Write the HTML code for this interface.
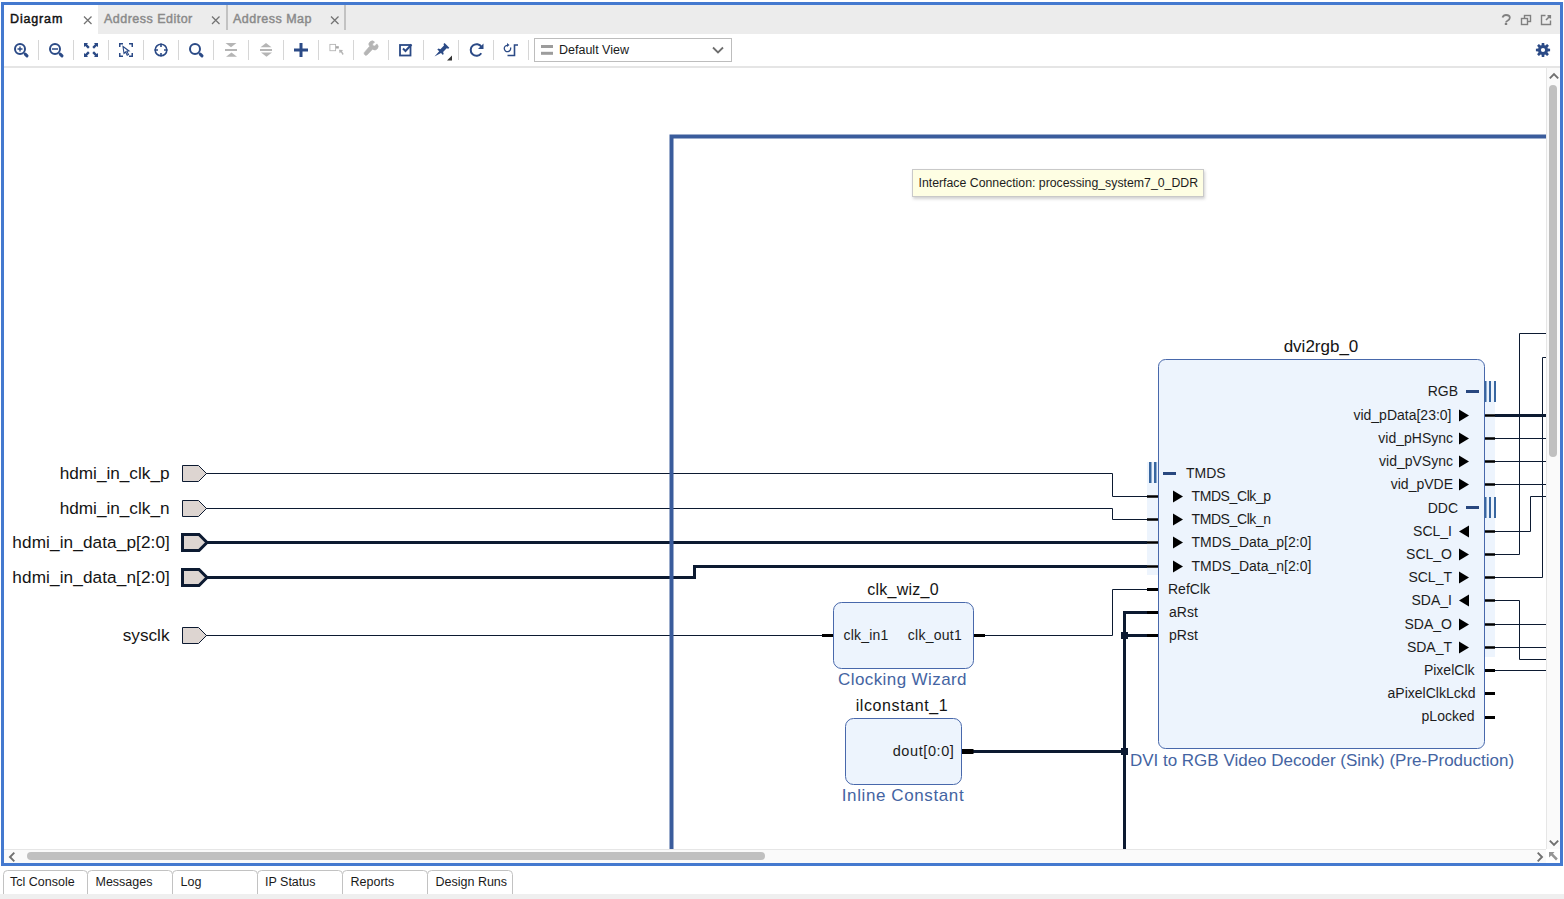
<!DOCTYPE html>
<html><head><meta charset="utf-8">
<style>
*{margin:0;padding:0;box-sizing:border-box}
html,body{width:1564px;height:899px;overflow:hidden;background:#fff;font-family:"Liberation Sans",sans-serif;color:#1a1a1a}
.a{position:absolute;white-space:pre}
#frame{position:absolute;left:1px;top:2px;width:1562px;height:864px;border:3px solid #4479cf}
#tabbar{position:absolute;left:4px;top:5px;width:1556px;height:29px;background:#ececec}
#toolbar{position:absolute;left:4px;top:34px;width:1556px;height:32px;background:#fff}
#tbsep{position:absolute;left:4px;top:66px;width:1556px;height:2px;background:#e5e5e5}
#canvas{position:absolute;left:4px;top:68px;width:1542px;height:781px;background:#fff;overflow:hidden}
.tab{position:absolute;top:5px;height:29px;font-size:12.5px;line-height:29px;color:#8a8a8a}
.tsep{position:absolute;top:40px;width:1px;height:21px;background:#d4d4d4}
.btab{position:absolute;top:870px;height:24px;border:1px solid #c4c4c4;border-bottom:none;border-radius:4px 4px 0 0;font-size:12.5px;line-height:22px;padding-left:7px;color:#1a1a1a;background:#fff}
.lbl{position:absolute;white-space:pre;font-size:17px;line-height:20px;color:#151515}
.pl{position:absolute;white-space:pre;font-size:14px;line-height:16px;color:#1c1c1c}
.typ{position:absolute;white-space:pre;font-size:17px;line-height:20px;color:#4a6aa8}
</style></head><body>
<div id="frame"></div>
<div id="tabbar"></div>
<div id="toolbar"></div>
<div id="tbsep"></div>
<div id="canvas"></div>

<!-- tabs -->
<div class="tab" style="left:4px;width:94px;background:#fff;color:#111;padding-left:6px;letter-spacing:0.85px;-webkit-text-stroke:0.45px #111">Diagram</div>
<div class="tab" style="left:104px;letter-spacing:0.48px;-webkit-text-stroke:0.45px #8a8a8a">Address Editor</div>
<div class="tab" style="left:233px;letter-spacing:0.48px;-webkit-text-stroke:0.45px #8a8a8a">Address Map</div>

<!-- tab separators & tab bar icons -->
<div class="a" style="left:226px;top:5px;width:2px;height:25px;background:#c2c2c2"></div>
<div class="a" style="left:344px;top:5px;width:2px;height:25px;background:#c2c2c2"></div>
<svg class="a" style="left:0;top:0" width="1564" height="68" viewBox="0 0 1564 68">
 <g stroke="#737373" stroke-width="1.3" fill="none">
  <path d="M84 16.5 L91.5 24 M91.5 16.5 L84 24"/>
  <path d="M212 16.5 L219.5 24 M219.5 16.5 L212 24"/>
  <path d="M331 16.5 L338.5 24 M338.5 16.5 L331 24"/>
 </g>
 <g stroke="#808080" fill="none" stroke-width="1.4">
  <path d="M1502.5 17.5 Q1503.5 15 1506 15 Q1509.8 15 1509.8 17.8 Q1509.8 19.5 1507.5 20.8 Q1506 21.6 1506 22.5" stroke-width="1.8"/>
  <rect x="1524.5" y="15.5" width="6" height="6"/>
  <rect x="1521.5" y="18.5" width="6" height="6" fill="#ececec"/>
  <path d="M1545.5 15.5 H1541.5 V24.5 H1550.5 V20.5"/>
  <path d="M1546 20 L1550 16 M1547.5 15.8 H1550.3 V18.5" stroke-width="1.6"/>
 </g>
 <rect x="1504.8" y="23" width="2.4" height="2" fill="#808080"/>
 <!-- toolbar separators -->
 <g fill="#d6d6d6">
  <rect x="38" y="40" width="1" height="20"/><rect x="73" y="40" width="1" height="20"/><rect x="108" y="40" width="1" height="20"/>
  <rect x="143" y="40" width="1" height="20"/><rect x="178" y="40" width="1" height="20"/><rect x="213" y="40" width="1" height="20"/>
  <rect x="248" y="40" width="1" height="20"/><rect x="283" y="40" width="1" height="20"/><rect x="318" y="40" width="1" height="20"/>
  <rect x="353" y="40" width="1" height="20"/><rect x="388" y="40" width="1" height="20"/><rect x="423" y="40" width="1" height="20"/>
  <rect x="458" y="40" width="1" height="20"/><rect x="493" y="40" width="1" height="20"/><rect x="528" y="40" width="1" height="20"/>
 </g>
 <g stroke="#2b4a86" fill="none" stroke-width="2">
  <!-- zoom in -->
  <circle cx="20" cy="49" r="5"/>
  <path d="M17.5 49 H22.5 M20 46.5 V51.5" stroke-width="1.4"/>
  <path d="M25.2 54.1 L27 55.9" stroke-width="3" stroke-linecap="round"/>
  <!-- zoom out -->
  <circle cx="55" cy="49" r="5"/>
  <path d="M52 49 H58" stroke-width="1.5"/>
  <path d="M60.2 54.1 L62 55.9" stroke-width="3" stroke-linecap="round"/>
  <!-- search -->
  <circle cx="195" cy="49" r="5"/>
  <path d="M200.2 54.1 L202 55.9" stroke-width="3" stroke-linecap="round"/>
  <!-- refresh -->
  <path d="M481.5 47 A5.8 5.8 0 1 0 481.3 53.2"/>
  <!-- center -->
  <circle cx="161" cy="50" r="5.8" stroke-width="1.6"/>
  <path d="M161 43.5 V47 M161 53 V56.5 M154.5 50 H158 M164 50 H167.5" stroke-width="1.6"/>
  <!-- checkbox -->
  <rect x="400" y="45" width="10.5" height="10.5" stroke-width="1.8"/>
  <path d="M403 48.5 L405.5 51 L411.5 44.5" stroke-width="2"/>
  <!-- regen -->
  <path d="M510.5 47.5 A3.2 3.2 0 1 1 507.8 45.3" stroke-width="1.3"/>
  <path d="M507.5 55.5 H514.5 V45 H518" stroke-width="1.6"/>
 </g>
 <g fill="#2b4a86">
  <!-- refresh arrow head -->
  <path d="M483.5 43.5 V49 H478 Z"/>
  <path d="M507 43 L509.5 45 L507 47 Z"/>
  <!-- plus -->
  <rect x="299.5" y="43" width="3" height="14"/><rect x="294" y="48.5" width="14" height="3"/>
  <!-- fit arrows -->
  <path d="M84 43 H88 L87 44.3 L89.7 47 L88 48.7 L85.3 46 L84 47 Z"/>
  <path d="M98 43 H94 L95 44.3 L92.3 47 L94 48.7 L96.7 46 L98 47 Z"/>
  <path d="M84 57 H88 L87 55.7 L89.7 53 L88 51.3 L85.3 54 L84 53 Z"/>
  <path d="M98 57 H94 L95 55.7 L92.3 53 L94 51.3 L96.7 54 L98 53 Z"/>
  <!-- brackets zoom selection -->
  <path d="M119 43 H123 V44.5 H120.5 V47 H119 Z M133 43 H129 V44.5 H131.5 V47 H133 Z M119 57 H123 V55.5 H120.5 V53 H119 Z M133 57 H129 V55.5 H131.5 V53 H133 Z"/>
  <!-- pin -->
  <path d="M434.5 56.5 L439.2 51.3 L437.3 49.4 L438.5 48.6 L440.4 49.2 L444 45.6 L443.5 44 L444.6 43 L449.3 47.7 L448.3 48.8 L446.7 48.3 L443.1 51.9 L443.7 53.8 L442.9 55 L441 53.1 Z"/>
 </g>
 <path d="M447 60.5 L452 55.5 V60.5 Z" fill="#333"/>
 <g stroke="#2b4a86" fill="none" stroke-width="1.1">
  <path d="M123 46.5 L129 51 L126.8 51.3 L128.5 54.5 L127.2 55.2 L125.6 52 L124 53.5 Z"/>
 </g>
 <!-- gray disabled icons -->
 <g fill="#b5b5b5">
  <path d="M225.5 43 H236.5 L231 47.3 Z"/><rect x="225" y="49" width="12" height="2"/><path d="M226 56.8 H237 L231.5 52.5 Z"/>
  <path d="M260.5 47.3 H271.5 L266 43 Z"/><rect x="260" y="49" width="12" height="2"/><path d="M261 52.5 H272 L266.5 56.8 Z"/>
  <rect x="335.6" y="46.2" width="3.2" height="2.3" fill="#a5a5a5"/>
  <path d="M339 49.8 L343 50 L342 51.2 L343.7 54 L342.6 55 L340.9 52.2 L339.6 53.2 Z"/>
 </g>
 <rect x="329.9" y="44.4" width="5.7" height="6.3" fill="none" stroke="#b5b5b5" stroke-width="0.9"/>
 <path d="M367 55 L372.6 49.2 A3.3 3.3 0 0 0 376.8 43.9 L374.7 46.1 L373 45.7 L372.6 44 L374.6 42 A3.3 3.3 0 0 0 369.6 46.3 L365 51.7 A1 1 0 0 0 367 55 Z" fill="#b5b5b5" stroke="#b5b5b5" stroke-width="0.6"/>
 <!-- dropdown -->
 <rect x="534.5" y="38.5" width="197" height="23" fill="#fff" stroke="#bdbdbd"/>
 <rect x="541" y="45" width="12" height="3" fill="#9c9c9c"/><rect x="541" y="51.8" width="12" height="3" fill="#9c9c9c"/>
 <path d="M713 47.5 L718 52.5 L723 47.5" stroke="#6e6e6e" stroke-width="1.8" fill="none"/>
 <!-- gear -->
 <g transform="translate(1543 50)" fill="#2b4a86">
  <path d="M-1.46 -4.78 L-1.25 -7.09 L1.25 -7.09 L1.46 -4.78 L2.35 -4.41 L4.13 -5.90 L5.90 -4.13 L4.41 -2.35 L4.78 -1.46 L7.09 -1.25 L7.09 1.25 L4.78 1.46 L4.41 2.35 L5.90 4.13 L4.13 5.90 L2.35 4.41 L1.46 4.78 L1.25 7.09 L-1.25 7.09 L-1.46 4.78 L-2.35 4.41 L-4.13 5.90 L-5.90 4.13 L-4.41 2.35 L-4.78 1.46 L-7.09 1.25 L-7.09 -1.25 L-4.78 -1.46 L-4.41 -2.35 L-5.90 -4.13 L-4.13 -5.90 L-2.35 -4.41 Z"/>
  <circle r="2.1" fill="#fff"/>
 </g>
</svg>
<div class="a" style="left:559px;top:41px;font-size:12.5px;line-height:18px;color:#1a1a1a">Default View</div>

<!-- diagram -->
<svg class="a" style="left:4px;top:68px" width="1542" height="781" viewBox="4 68 1542 781" font-family="Liberation Sans, sans-serif">
 <!-- tooltip -->
 <rect x="912.5" y="169.5" width="291" height="27" fill="#fefee3" stroke="#c9c9c9" style="filter:drop-shadow(1px 2px 1.5px rgba(0,0,0,0.18))"/>
 <text x="918.5" y="187" font-size="12.3" fill="#1d1d1d">Interface Connection: processing_system7_0_DDR</text>

 <!-- external ports -->
 <g fill="#ddd5d1" stroke="#0c1a31">
  <path d="M182.5 465.5 H198.5 L206.5 473.5 L198.5 481.5 H182.5 Z" stroke-width="1"/>
  <path d="M182.5 500.5 H198.5 L206.5 508.5 L198.5 516.5 H182.5 Z" stroke-width="1"/>
  <path d="M182.5 627.5 H198.5 L206.5 635.5 L198.5 643.5 H182.5 Z" stroke-width="1"/>
  <path d="M182.5 534.5 H199 L207 542.5 L199 550.5 H182.5 Z" stroke-width="3"/>
  <path d="M182.5 569.5 H199 L207 577.5 L199 585.5 H182.5 Z" stroke-width="3"/>
 </g>
 <g font-size="17.2" fill="#141414" text-anchor="end">
  <text x="169.5" y="479">hdmi_in_clk_p</text>
  <text x="169.5" y="514">hdmi_in_clk_n</text>
  <text x="170" y="548" letter-spacing="0.1">hdmi_in_data_p[2:0]</text>
  <text x="170" y="583" letter-spacing="0.1">hdmi_in_data_n[2:0]</text>
  <text x="169.5" y="641">sysclk</text>
 </g>

 <!-- wires -->
 <g stroke="#0c1a31" fill="none" stroke-width="1">
  <path d="M206 473.5 H1112.5 V496.5 H1147"/>
  <path d="M206 508.5 H1112.5 V519.5 H1147"/>
  <path d="M206 635.5 H822"/>
  <path d="M985 635.5 H1112.5 V589.5 H1147"/>
  <path d="M1495 438.5 H1546 M1495 461.5 H1546 M1495 484.5 H1546"/>
  <path d="M1519.5 333.5 H1546 M1519.5 333.5 V554.5 H1495"/>
  <path d="M1542.5 357.5 H1546 M1542.5 357.5 V577.5 H1495"/>
  <path d="M1495 531.5 H1530.5 V496.5 H1546"/>
  <path d="M1495 600.5 H1519.5 V659.5 H1546"/>
  <path d="M1495 624.5 H1546 M1495 647.5 H1546 M1495 670.5 H1546"/>
 </g>
 <g stroke="#0c1a31" fill="none" stroke-width="3">
  <path d="M207 542.5 H1147"/>
  <path d="M207 577.5 H694.5 V566.5 H1147"/>
  <path d="M1147 612.5 H1124.5 V849"/>
  <path d="M1124.5 635.5 H1147"/>
  <path d="M973 751.5 H1124.5"/>
  <path d="M1495 415.5 H1546"/>
 </g>
 <!-- big interface rect -->
 <path d="M671.5 849 V136.5 H1546" stroke="#3a5c9c" stroke-width="4" fill="none"/>
 <rect x="1121" y="632" width="7" height="7" fill="#0c1a31"/>
 <rect x="1121" y="748" width="7" height="7" fill="#0c1a31"/>

 <!-- dvi2rgb block -->
 <rect x="1147" y="462" width="11" height="113" fill="#edf4fd"/>
 <rect x="1485" y="381" width="10" height="276" fill="#edf4fd"/>
 <rect x="1158.5" y="359.5" width="326" height="389" rx="7" fill="#edf4fd" stroke="#4868ab" stroke-width="1"/>
 <g fill="#3866a0">
  <rect x="1149" y="462" width="2.5" height="21"/><rect x="1154" y="462" width="2.5" height="21"/>
  <rect x="1484.5" y="381" width="2" height="21"/><rect x="1489" y="381" width="2" height="21"/><rect x="1494" y="381" width="2" height="21"/>
  <rect x="1484.5" y="497" width="2" height="21"/><rect x="1489" y="497" width="2" height="21"/><rect x="1494" y="497" width="2" height="21"/>
 </g>
 <g fill="#28477f">
  <rect x="1163" y="472" width="13" height="3"/>
  <rect x="1466" y="390" width="13" height="3"/>
  <rect x="1466" y="506" width="13" height="3"/>
 </g>
 <!-- stubs -->
 <g stroke="#000" stroke-width="3">
  <path d="M1147 496.5 H1158 M1147 519.5 H1158 M1147 542.5 H1158 M1147 566.5 H1158" stroke-width="2.5"/>
  <path d="M1147 589.5 H1158 M1147 612.5 H1158 M1147 635.5 H1158"/>
  <path d="M1485 415.5 H1495 M1485 438.5 H1495 M1485 461.5 H1495 M1485 484.5 H1495 M1485 531.5 H1495 M1485 554.5 H1495 M1485 577.5 H1495 M1485 600.5 H1495 M1485 624.5 H1495 M1485 647.5 H1495" stroke-width="2.5"/>
  <path d="M1485 670.5 H1495 M1485 693.5 H1495 M1485 717.5 H1495"/>
  <path d="M822 635.5 H833 M973.5 635.5 H985"/>
 </g>
 <rect x="962" y="749" width="11.5" height="5" fill="#000"/>
 <!-- triangles -->
 <g fill="#000">
  <path d="M1173 490.5 L1183 496.5 L1173 502.5 Z"/>
  <path d="M1173 513.5 L1183 519.5 L1173 525.5 Z"/>
  <path d="M1173 536.5 L1183 542.5 L1173 548.5 Z"/>
  <path d="M1173 560.5 L1183 566.5 L1173 572.5 Z"/>
  <path d="M1459 409.5 L1469 415.5 L1459 421.5 Z"/>
  <path d="M1459 432.5 L1469 438.5 L1459 444.5 Z"/>
  <path d="M1459 455.5 L1469 461.5 L1459 467.5 Z"/>
  <path d="M1459 478.5 L1469 484.5 L1459 490.5 Z"/>
  <path d="M1469 525.5 L1459 531.5 L1469 537.5 Z"/>
  <path d="M1459 548.5 L1469 554.5 L1459 560.5 Z"/>
  <path d="M1459 571.5 L1469 577.5 L1459 583.5 Z"/>
  <path d="M1469 594.5 L1459 600.5 L1469 606.5 Z"/>
  <path d="M1459 618.5 L1469 624.5 L1459 630.5 Z"/>
  <path d="M1459 641.5 L1469 647.5 L1459 653.5 Z"/>
 </g>
 <g font-size="14" fill="#1c1c1c">
  <text x="1186" y="478">TMDS</text>
  <text x="1191.5" y="501" letter-spacing="-0.4">TMDS_Clk_p</text>
  <text x="1191.5" y="524" letter-spacing="-0.4">TMDS_Clk_n</text>
  <text x="1191.5" y="547">TMDS_Data_p[2:0]</text>
  <text x="1191.5" y="571">TMDS_Data_n[2:0]</text>
  <text x="1168" y="594">RefClk</text>
  <text x="1169" y="617">aRst</text>
  <text x="1169" y="640">pRst</text>
 </g>
 <g font-size="14" fill="#1c1c1c" text-anchor="end">
  <text x="1458" y="396">RGB</text>
  <text x="1451.5" y="420">vid_pData[23:0]</text>
  <text x="1453" y="443">vid_pHSync</text>
  <text x="1453" y="466">vid_pVSync</text>
  <text x="1453" y="489">vid_pVDE</text>
  <text x="1458" y="513">DDC</text>
  <text x="1452" y="536">SCL_I</text>
  <text x="1452" y="559">SCL_O</text>
  <text x="1452" y="582">SCL_T</text>
  <text x="1452" y="605">SDA_I</text>
  <text x="1452" y="629">SDA_O</text>
  <text x="1452" y="652">SDA_T</text>
  <text x="1474.5" y="675">PixelClk</text>
  <text x="1475.5" y="698">aPixelClkLckd</text>
  <text x="1474.5" y="721">pLocked</text>
 </g>
 <g font-size="17" text-anchor="middle">
  <text x="1321" y="352" fill="#141414">dvi2rgb_0</text>
  <text x="1322" y="766" fill="#4464a2">DVI to RGB Video Decoder (Sink) (Pre-Production)</text>
 </g>

 <!-- clk_wiz -->
 <rect x="833.5" y="602.5" width="140" height="66" rx="8" fill="#edf4fd" stroke="#4868ab"/>
 <text x="903" y="595" font-size="16" letter-spacing="0.25" text-anchor="middle" fill="#141414">clk_wiz_0</text>
 <text x="843.5" y="640" font-size="14" letter-spacing="0.2" fill="#1c1c1c">clk_in1</text>
 <text x="962" y="640" font-size="14" letter-spacing="0.25" fill="#1c1c1c" text-anchor="end">clk_out1</text>
 <text x="902.5" y="685" font-size="17" letter-spacing="0.4" text-anchor="middle" fill="#4464a2">Clocking Wizard</text>
 <!-- ilconstant -->
 <rect x="845.5" y="718.5" width="116" height="66" rx="8" fill="#edf4fd" stroke="#4868ab"/>
 <text x="902" y="711" font-size="16" letter-spacing="0.6" text-anchor="middle" fill="#141414">ilconstant_1</text>
 <text x="954.5" y="756" font-size="14.5" letter-spacing="0.6" fill="#1c1c1c" text-anchor="end">dout[0:0]</text>
 <text x="903" y="801" font-size="17" letter-spacing="0.6" text-anchor="middle" fill="#4464a2">Inline Constant</text>
</svg>

<!-- scrollbars -->
<div class="a" style="left:1546px;top:68px;width:14px;height:781px;background:#fafafa;border-left:1px solid #e6e6e6"></div>
<div class="a" style="left:4px;top:849px;width:1542px;height:14px;background:#fafafa;border-top:1px solid #e6e6e6"></div>
<div class="a" style="left:1546px;top:849px;width:14px;height:14px;background:#fff"></div>
<div class="a" style="left:1549px;top:85px;width:8px;height:372px;background:#c0c0c0;border-radius:4px"></div>
<div class="a" style="left:27px;top:852px;width:738px;height:8px;background:#c0c0c0;border-radius:4px"></div>
<svg class="a" style="left:0;top:0" width="1564" height="899" viewBox="0 0 1564 899">
 <g stroke="#707070" stroke-width="1.9" fill="none">
  <path d="M1549.8 78.3 L1554 74 L1558.2 78.3"/>
  <path d="M1549.8 840.7 L1554 845 L1558.2 840.7"/>
  <path d="M14.3 852.7 L10 857 L14.3 861.3"/>
  <path d="M1537.7 852.7 L1542 857 L1537.7 861.3"/>
 </g>
 <path d="M1549 852 H1554.5 L1553 853.8 L1557.8 858.6 L1556 860.4 L1551.2 855.6 L1549 857.5 Z" fill="#959595"/>
</svg>
<!-- bottom tabs -->
<div class="a" style="left:0;top:894px;width:1564px;height:5px;background:#efefef"></div>
<svg class="a" style="left:0;top:866px" width="520" height="28" viewBox="0 866 520 28">
 <g stroke="#c2c2c2" stroke-width="1" fill="#fff">
  <path d="M3.5 894 V874.5 Q3.5 870.5 7.5 870.5 H83.5 Q87.5 870.5 87.5 874.5 V894"/>
  <path d="M87.5 894 V874.5 Q87.5 870.5 91.5 870.5 H168.5 Q172.5 870.5 172.5 874.5 V894"/>
  <path d="M172.5 894 V874.5 Q172.5 870.5 176.5 870.5 H253.5 Q257.5 870.5 257.5 874.5 V894"/>
  <path d="M257.5 894 V874.5 Q257.5 870.5 261.5 870.5 H338.5 Q342.5 870.5 342.5 874.5 V894"/>
  <path d="M342.5 894 V874.5 Q342.5 870.5 346.5 870.5 H423.5 Q427.5 870.5 427.5 874.5 V894"/>
  <path d="M427.5 894 V874.5 Q427.5 870.5 431.5 870.5 H508.5 Q512.5 870.5 512.5 874.5 V894"/>
 </g>
 <g font-family="Liberation Sans, sans-serif" font-size="12.5" fill="#1a1a1a">
  <text x="10" y="886">Tcl Console</text>
  <text x="95.5" y="886">Messages</text>
  <text x="180.5" y="886">Log</text>
  <text x="265" y="886">IP Status</text>
  <text x="350.5" y="886">Reports</text>
  <text x="435.5" y="886">Design Runs</text>
 </g>
</svg>

</body></html>
